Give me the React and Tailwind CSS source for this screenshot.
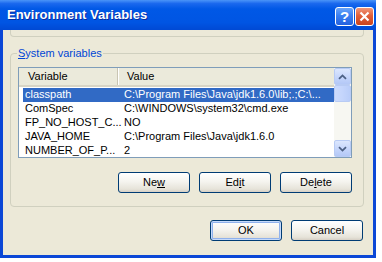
import React from 'react'

const rows = [
  ['classpath', 'C:\\Program Files\\Java\\jdk1.6.0\\lib;.;C:\\...'],
  ['ComSpec', 'C:\\WINDOWS\\system32\\cmd.exe'],
  ['FP_NO_HOST_C...', 'NO'],
  ['JAVA_HOME', 'C:\\Program Files\\Java\\jdk1.6.0'],
  ['NUMBER_OF_P...', '2'],
]

const XpButton = ({ children, isDefault }) => (
  <button
    className={
      'w-[72px] h-[21px] rounded-[3px] border border-[#003c74] text-[11px] text-black leading-none bg-[linear-gradient(180deg,#ffffff_0%,#f5f4ef_45%,#e6e3d9_85%,#d6d0c5_100%)] ' +
      (isDefault ? 'shadow-[inset_0_0_0_1px_#c6dafa,inset_0_0_0_2px_#8fb1ec]' : '')
    }
  >
    {children}
  </button>
)

const ScrollBtn = ({ down }) => (
  <div className="w-[17px] h-[17px] rounded-[2px] border border-[#b8cbf4] bg-[linear-gradient(180deg,#dce7fe_0%,#c3d4fb_60%,#b4c8f6_100%)] flex items-center justify-center">
    <svg width="9" height="6" viewBox="0 0 9 6">
      <path
        d={down ? 'M1 1.2 L4.5 4.6 L8 1.2' : 'M1 4.8 L4.5 1.4 L8 4.8'}
        fill="none"
        stroke="#4d6185"
        strokeWidth="1.8"
      />
    </svg>
  </div>
)

export default function App() {
  return (
    <div className="w-[382px] h-[262px] bg-white overflow-hidden font-['Liberation_Sans',Arial,sans-serif]">
      <div className="w-[376px] h-[258px] flex flex-col">
        {/* Title bar */}
        <div className="h-[30px] flex items-center pl-[7px] pr-[2px] bg-[linear-gradient(180deg,#4a95f8_0%,#1a68ee_12%,#0058e6_30%,#0055e3_75%,#0049d4_100%)]">
          <span className="flex-1 text-white font-bold text-[13px] [text-shadow:1px_1px_0_#0b2c9e]">
            Environment Variables
          </span>
          <div className="flex gap-[1px] mt-[2px]">
            <div className="w-[19px] h-[19px] rounded-[3px] border border-white bg-[linear-gradient(180deg,#6aa5f9_0%,#3b80f2_45%,#2461de_100%)] flex items-center justify-center text-white font-bold text-[15px] leading-none">
              ?
            </div>
            <div className="w-[19px] h-[19px] rounded-[3px] border border-white bg-[linear-gradient(180deg,#f0977a_0%,#e1603a_45%,#c9431d_100%)] flex items-center justify-center">
              <svg width="11" height="11" viewBox="0 0 11 11">
                <path d="M1.5 1.5 L9.5 9.5 M9.5 1.5 L1.5 9.5" stroke="#fff" strokeWidth="2.2" />
              </svg>
            </div>
          </div>
        </div>

        {/* Body */}
        <div className="flex-1 border-x-[3px] border-b-[3px] border-[#0b47d6] bg-[#ece9d8] pl-[7px] pr-[9px] flex flex-col text-[11px] text-black">
          {/* upper group (scrolled off) */}
          <div className="h-[7px] w-[354px] border border-t-0 border-[#d0d0bf] rounded-b-[4px]" />

          {/* System variables */}
          <div className="relative mt-[16px] w-[354px] border border-[#d0d0bf] rounded-[4px] pl-[7px] pt-[13px] pb-[13px]">
            <span className="absolute left-[6px] top-[-7px] px-[1px] bg-[#ece9d8] text-[#0046d5] leading-[13px]">
              <span className="underline">S</span>ystem variables
            </span>

            {/* List view */}
            <div className="w-[334px] h-[91px] border border-[#7f9db9] bg-white flex">
              <div className="w-[315px] flex flex-col">
                <div className="h-[19px] flex items-center bg-[#ebeadb] border-b-[2px] border-[#d8d5c5]">
                  <div className="w-[99px] pl-[9px] h-full flex items-center border-r border-[#c9c5b3]">Variable</div>
                  <div className="pl-[8px] border-l border-white h-full flex items-center">Value</div>
                </div>
                <div className="pt-[1px] flex flex-col">
                  {rows.map(([name, value], i) => (
                    <div
                      key={name}
                      className={
                        'ml-[4px] h-[14px] flex items-center whitespace-nowrap overflow-hidden ' +
                        (i === 0 ? 'bg-[#316ac5] text-white' : '')
                      }
                    >
                      <div className="w-[101px] pl-[2px] shrink-0">{name}</div>
                      <div>{value}</div>
                    </div>
                  ))}
                </div>
              </div>
              {/* Scrollbar */}
              <div className="w-[17px] bg-[#f7f7f2] flex flex-col">
                <ScrollBtn />
                <div className="h-[17px] rounded-[2px] border border-[#b8cbf4] bg-[linear-gradient(90deg,#cddbfc_0%,#c4d5fc_50%,#b9cdf9_100%)]" />
                <div className="flex-1" />
                <ScrollBtn down />
              </div>
            </div>

            <div className="mt-[14px] w-[334px] flex justify-end gap-[9px]">
              <XpButton>
                Ne<span className="underline">w</span>
              </XpButton>
              <XpButton>
                Ed<span className="underline">i</span>t
              </XpButton>
              <XpButton>
                De<span className="underline">l</span>ete
              </XpButton>
            </div>
          </div>

          <div className="mt-[13px] w-[353px] flex justify-end gap-[9px]">
            <XpButton isDefault>OK</XpButton>
            <XpButton>Cancel</XpButton>
          </div>
        </div>
      </div>
    </div>
  )
}
